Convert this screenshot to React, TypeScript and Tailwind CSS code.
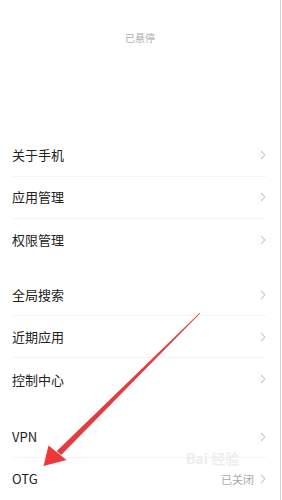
import React from 'react'

const font = { fontFamily: '"Noto Sans CJK SC", "Noto Sans", sans-serif' }

function Chevron() {
  return (
    <svg width="6" height="10" viewBox="0 0 6 10" className="shrink-0">
      <polyline points="1,1 5,5 1,9" fill="none" stroke="#cdcdcd" strokeWidth="1.1" />
    </svg>
  )
}

function Row({ label, value, last }: { label: string; value?: string; last?: boolean }) {
  return (
    <div className={`flex h-[42px] items-center justify-between mr-[14px] ${last ? '' : 'border-b border-[#f4f4f4]'}`}>
      <span className="text-[13px] text-[#222]">{label}</span>
      <div className="flex items-center gap-[6px]">
        {value && <span className="text-[11px] text-[#a8a8a8]">{value}</span>}
        <Chevron />
      </div>
    </div>
  )
}

function Group({ items }: { items: { label: string; value?: string }[] }) {
  return (
    <div className="pl-[12px]">
      {items.map((it, i) => (
        <Row key={it.label} label={it.label} value={it.value} last={i === items.length - 1} />
      ))}
    </div>
  )
}

export default function App() {
  return (
    <div className="relative flex w-[282px] h-[500px] overflow-hidden bg-white" style={font}>
      <div className="w-[280px] flex flex-col">
        <div className="pt-[30px] h-[137px] text-center text-[10px] text-[#b0b0b0]">已悬停</div>
        <Group items={[{ label: '关于手机' }, { label: '应用管理' }, { label: '权限管理' }]} />
        <div className="h-[14px]" />
        <Group items={[{ label: '全局搜索' }, { label: '近期应用' }, { label: '控制中心' }]} />
        <div className="h-[16px]" />
        <Group items={[{ label: 'VPN' }, { label: 'OTG', value: '已关闭' }]} />
      </div>
      <div className="w-px bg-[#d4d4d4]" />

      {/* watermark */}
      <div className="absolute left-[186px] top-[451px] text-[14px] font-bold leading-none text-[#ededed] pointer-events-none">
        Bai 经验
      </div>

      {/* red annotation arrow */}
      <svg className="absolute left-0 top-0 pointer-events-none" width="282" height="500">
        <polygon points="200.3,313.2 199.7,312.8 56.8,451 61.2,455" fill="#e43c3c" />
        <polygon points="43.5,466 48.5,445.5 66.5,460" fill="#ee3838" />
      </svg>
    </div>
  )
}
